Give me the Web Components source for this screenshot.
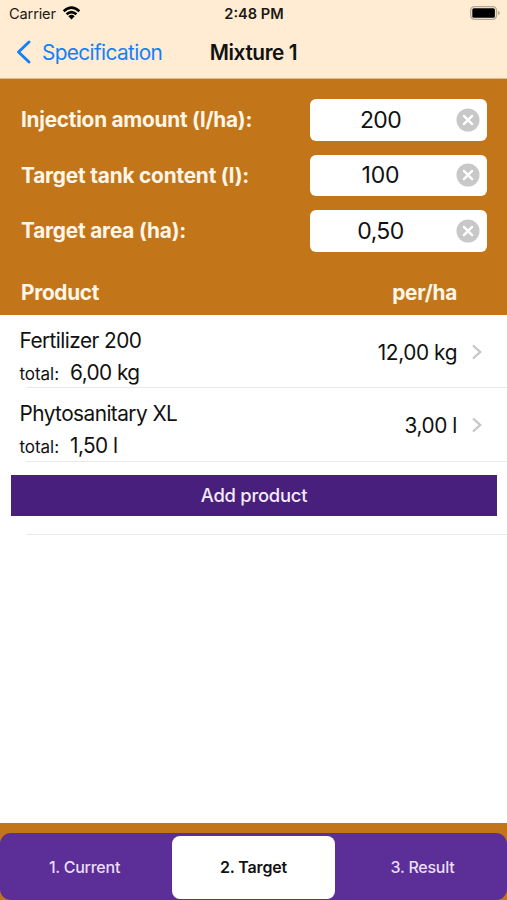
<!DOCTYPE html>
<html lang="en">
<head>
<meta charset="utf-8">
<title>Mixture 1</title>
<style>
html,body{margin:0;height:100%}
body{font-family:Inter,"Liberation Sans",sans-serif;color:#111;background:#fff;overflow:hidden}
</style>
</head>
<body>
<mix-app>
  <status-bar slot="top" carrier="Carrier" time="2:48 PM"></status-bar>
  <nav-bar slot="top" back="Specification">Mixture 1</nav-bar>
  <amount-field slot="form" value="200" style="--ls:-.24px">Injection amount (l/ha):</amount-field>
  <amount-field slot="form" value="100" style="--ls:-.18px;--vls:-.2px">Target tank content (l):</amount-field>
  <amount-field slot="form" value="0,50" style="--ls:-.18px">Target area (ha):</amount-field>
  <list-head slot="form" unit="per/ha">Product</list-head>
  <product-row total="6,00 kg" rate="12,00 kg">Fertilizer 200</product-row>
  <product-row total="1,50 l" rate="3,00 l">Phytosanitary XL</product-row>
  <add-button>Add product</add-button>
  <tab-strip slot="bottom">
    <tab-item>1. Current</tab-item>
    <tab-item active>2. Target</tab-item>
    <tab-item>3. Result</tab-item>
  </tab-strip>
</mix-app>
<script>
const define = (name, render) =>
  customElements.define(
    name,
    class extends HTMLElement {
      constructor() {
        super();
        this.attachShadow({ mode: "open" });
      }
      connectedCallback() {
        const t = document.createElement("template");
        t.innerHTML = render(k => this.getAttribute(k) || "");
        this.shadowRoot.replaceChildren(t.content.cloneNode(true));
      }
    }
  );

define("mix-app", () => `
<style>
:host{display:flex;flex-direction:column;height:100vh}
header{background:#ffecd3;height:79px;box-sizing:border-box;border-bottom:1px solid #dfb98a}
.form{background:#c37519;height:236px;box-sizing:border-box;padding-top:20px}
main{flex:1}
footer{background:#c37519;height:77px;box-sizing:border-box;padding-top:10px}
</style>
<header><slot name="top"></slot></header>
<section class="form"><slot name="form"></slot></section>
<main><slot></slot></main>
<footer><slot name="bottom"></slot></footer>`);

define("status-bar", a => `
<style>
:host{display:grid;grid-template-columns:1fr auto 1fr;align-items:center;height:25px;padding:2px 7px 0 9px;box-sizing:border-box;font-size:14.6px;color:#1c1914}
.l{display:flex;align-items:center;gap:6px;letter-spacing:-.15px}
.l svg{margin-top:-1px}
.t{font-weight:600;letter-spacing:0;margin-left:-1px}
.b{justify-self:end;display:flex;margin-top:-1px}
svg{display:block}
</style>
<div class="l"><span>${a("carrier")}</span>
<svg width="19" height="14" viewBox="0 0 20 15" fill="none" stroke="#000" stroke-width="2.700"><path d="M1.6 5.6Q10-2 18.4 5.6M4.7 8.9Q10 4.2 15.3 8.9"/><path d="M6.600 10.900Q10 8 13.400 10.900L10 14.400Z" fill="#000" stroke="none"/></svg></div>
<span class="t">${a("time")}</span>
<div class="b"><svg width="30" height="14" viewBox="0 0 30 14"><rect x=".7" y=".7" width="25.800" height="12.600" rx="3.800" fill="none" stroke="#b3a793" stroke-width="1.300"/><rect x="2.300" y="2.300" width="22.600" height="9.400" rx="1.500" fill="#000"/><path d="M28 4.700q1.800.7 1.800 2.300t-1.800 2.300z" fill="#b3a793"/></svg></div>`);

define("nav-bar", a => `
<style>
:host{display:grid;grid-template-columns:1fr auto 1fr;align-items:center;height:55px;padding:0 16px;font-size:20.8px}
.back{display:flex;align-items:center;gap:10px;color:#1480f8;letter-spacing:-.62px}
.back svg{margin-top:-2px}
.title{font-weight:600;color:#111;letter-spacing:-.4px}
</style>
<div class="back"><svg width="16" height="24" viewBox="0 0 16 24" fill="none" stroke="#1480f8" stroke-width="2.900" stroke-linecap="round" stroke-linejoin="round"><path d="M13 2L2.500 12L13 22"/></svg><span>${a("back")}</span></div>
<div class="title"><slot></slot></div>`);

define("amount-field", a => `
<style>
:host{display:flex;justify-content:space-between;align-items:center;height:41.500px;margin:0 20px 14px 21px;font-size:20.8px}
.label{font-weight:700;color:#fff6e8;letter-spacing:var(--ls)}
.box{display:flex;align-items:center;width:177px;height:41.500px;border-radius:6px;background:#fff;box-sizing:border-box;padding-right:7px}
.val{flex:1;text-align:center;font-size:23px;letter-spacing:var(--vls,-.6px);padding-right:5px}
</style>
<span class="label"><slot></slot></span>
<div class="box"><span class="val">${a("value")}</span>
<svg width="24" height="24" viewBox="0 0 24 24"><circle cx="12" cy="12" r="11.500" fill="#c8c8c8"/><path d="M7.900 7.900l8.200 8.200m0-8.200l-8.200 8.200" stroke="#fff" stroke-width="2.300" stroke-linecap="round"/></svg></div>`);

define("list-head", a => `
<style>
:host{display:flex;justify-content:space-between;align-items:center;height:30px;padding:12px 50px 0 21px;font-size:20.8px;font-weight:700;color:#fff6e8;letter-spacing:-.28px}
</style>
<span><slot></slot></span><span>${a("unit")}</span>`);

define("product-row", a => `
<style>
:host{display:flex;align-items:center;height:73.3px;box-sizing:border-box;padding:0 24px 0 19.500px;font-size:20.8px;letter-spacing:-.4px;background:linear-gradient(#e9e9e9,#e9e9e9) 26px 100%/100% 1px no-repeat}
.info{flex:1;padding-top:12px}
.name,.total{line-height:32.500px}
.name{letter-spacing:-.55px}
.total{display:flex;align-items:baseline;gap:11px;letter-spacing:-.56px}
.rate{padding-top:2px}
small{font-size:17px;letter-spacing:-.05px}
svg{margin-left:14px;margin-top:1px}
</style>
<div class="info"><div class="name"><slot></slot></div>
<div class="total"><small>total:</small><span>${a("total")}</span></div></div>
<span class="rate">${a("rate")}</span>
<svg width="12" height="18" viewBox="0 0 12 18" fill="none" stroke="#c6c6c8" stroke-width="2.300"><path d="M2 2.500l7.200 6.500L2 15.500"/></svg>`);

define("add-button", () => `
<style>
:host{display:block;height:73.4px;box-sizing:border-box;padding:13.400px 10px 0 11px;background:linear-gradient(#e9e9e9,#e9e9e9) 26px 100%/100% 1px no-repeat}
button{display:block;width:100%;height:41px;border:0;padding:0;background:#481f7c;color:#f3eafa;font:500 18.400px Inter,"Liberation Sans",sans-serif;letter-spacing:-.25px}
</style>
<button><slot></slot></button>`);

define("tab-strip", () => `
<style>
:host{display:grid;grid-template-columns:1fr 1fr 1fr;height:67px;background:#5c2e98;border-radius:11px;box-sizing:border-box;padding:2.500px 0 1.500px}
</style>
<slot></slot>`);

define("tab-item", () => `
<style>
:host{display:flex;align-items:center;justify-content:center;font-size:16px;font-weight:500;letter-spacing:-.25px;color:#eadff5;border-radius:8px;margin:0 3px}
:host([active]){background:#fff;color:#111;font-weight:600;letter-spacing:-.15px}
</style>
<slot></slot>`);
</script>
</body>
</html>
